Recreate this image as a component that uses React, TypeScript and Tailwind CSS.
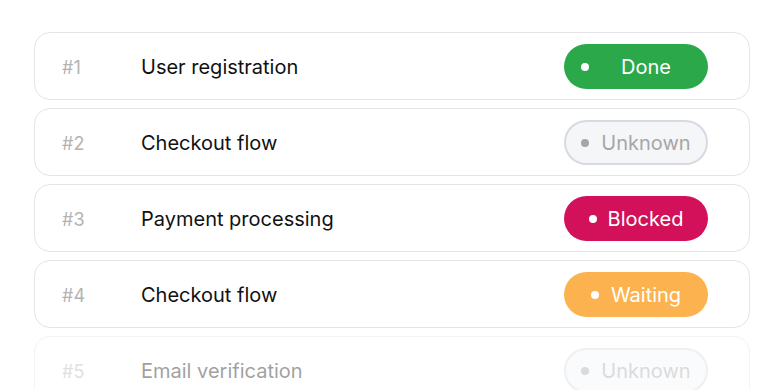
type Status = 'done' | 'unknown' | 'blocked' | 'waiting';

interface Task {
  id: number;
  title: string;
  status: Status;
}

const tasks: Task[] = [
  { id: 1, title: 'User registration', status: 'done' },
  { id: 2, title: 'Checkout flow', status: 'unknown' },
  { id: 3, title: 'Payment processing', status: 'blocked' },
  { id: 4, title: 'Checkout flow', status: 'waiting' },
  { id: 5, title: 'Email verification', status: 'unknown' },
];

const badgeStyles: Record<Status, { label: string; box: string; dot: string }> = {
  done: {
    label: 'Done',
    box: 'bg-[#2aa84a] text-white gap-8 pr-5',
    dot: 'bg-white',
  },
  unknown: {
    label: 'Unknown',
    box: 'bg-[#f5f6f8] text-[#a6a6a6] border-2 border-[#d7dae0] gap-3',
    dot: 'bg-[#a6a6a6]',
  },
  blocked: {
    label: 'Blocked',
    box: 'bg-[#d2115a] text-white gap-[11px]',
    dot: 'bg-white',
  },
  waiting: {
    label: 'Waiting',
    box: 'bg-[#fcb24e] text-white gap-3',
    dot: 'bg-white',
  },
};

function StatusBadge({ status }: { status: Status }) {
  const s = badgeStyles[status];
  return (
    <div
      className={`mt-px flex h-[45px] w-[144px] items-center justify-center rounded-full text-[20px] ${s.box}`}
    >
      <span className={`h-2 w-2 shrink-0 rounded-full ${s.dot}`} />
      <span>{s.label}</span>
    </div>
  );
}

export default function App() {
  return (
    <div className="min-h-screen bg-white px-[34px] pt-8 font-['Inter',sans-serif]">
      {/* Task list */}
      <div className="flex flex-col gap-2">
        {tasks.map((task) => (
          <div
            key={task.id}
            className={`flex h-[68px] items-center rounded-2xl border border-[#e4e4e6] pl-[27px] pr-[41px] ${
              task.id === 5 ? 'opacity-40' : ''
            }`}
          >
            <span className="mt-0.5 w-[79px] text-[18px] text-[#b3b3b3]">#{task.id}</span>
            <span className="mt-0.5 flex-1 text-[20px] text-[#111]">{task.title}</span>
            <StatusBadge status={task.status} />
          </div>
        ))}
      </div>
    </div>
  );
}
